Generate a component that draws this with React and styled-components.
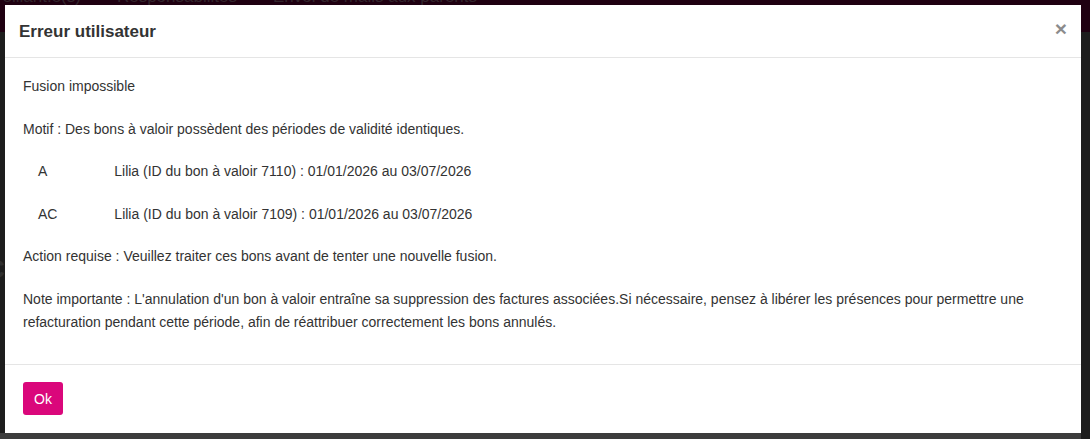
import React from "react";
import styled, { createGlobalStyle } from "styled-components";

const Global = createGlobalStyle`
  html, body { margin: 0; padding: 0; }
  body {
    width: 1090px;
    height: 439px;
    overflow: hidden;
    background: #1d1d1d;
    font-family: "Liberation Sans", Arial, sans-serif;
  }
`;

const Page = styled.div`
  position: relative;
  width: 1090px;
  height: 439px;
  display: flex;
  flex-direction: column;
  background: #1d1d1d;
`;

const NavBar = styled.div`
  height: 32px;
  background: #1f0011;
  display: flex;
  gap: 36px;
  overflow: hidden;
`;

const NavItem = styled.span`
  margin-top: -13px;
  font-size: 17px;
  line-height: 20px;
  color: #33262d;
  white-space: nowrap;
  margin-left: ${(p) => p.$offset || 0}px;
`;

const Main = styled.div`
  flex: 1;
  padding-top: 222px;
`;

const PageHeading = styled.div`
  margin-left: -14px;
  width: 18px;
  overflow: hidden;
  font-size: 26px;
  font-weight: bold;
  color: #2f2f2f;
`;

const BottomBar = styled.div`
  height: 6px;
  width: 1081px;
  background: #3c3c3c;
`;

const Modal = styled.div`
  position: absolute;
  left: 5px;
  top: 5px;
  width: 1076px;
  height: 428px;
  background: #fff;
  display: flex;
  flex-direction: column;
  color: #333;
`;

const Header = styled.div`
  display: flex;
  align-items: center;
  justify-content: space-between;
  height: 52px;
  padding: 0 14px;
  border-bottom: 1px solid #e5e5e5;
`;

const Title = styled.h4`
  margin: 0;
  font-size: 17px;
  font-weight: bold;
  color: #333;
  line-height: 25px;
`;

const Close = styled.button`
  border: 0;
  background: transparent;
  padding: 0;
  margin-top: -5px;
  font-family: "Liberation Sans", Arial, sans-serif;
  font-size: 21px;
  font-weight: bold;
  line-height: 1;
  color: #000;
  opacity: 0.45;
  cursor: pointer;
`;

const Body = styled.div`
  flex: 1;
  padding: 17px 18px 0;
  font-size: 14px;
  line-height: 23px;
`;

const Para = styled.p`
  margin: 0 0 19.6px;
  padding-left: ${(p) => (p.$indent ? 15 : 0)}px;
`;

const Redacted = styled.span`
  display: inline-block;
  width: ${(p) => p.$w}px;
  height: 1em;
`;

const Footer = styled.div`
  height: 69px;
  box-sizing: border-box;
  border-top: 1px solid #e5e5e5;
  padding: 17px 18px;
  display: flex;
  align-items: flex-start;
`;

const Button = styled.button`
  width: 40px;
  height: 33px;
  border: 0;
  border-radius: 3px;
  background: #da077b;
  color: #fff;
  font-family: "Liberation Sans", Arial, sans-serif;
  font-size: 14px;
  padding: 0;
  cursor: pointer;
`;

export default function App() {
  return (
    <>
      <Global />
      <Page>
        <NavBar>
          <NavItem $offset={-6}>veillant.e(s)</NavItem>
          <NavItem>Responsabilités</NavItem>
          <NavItem>Envoi de mails aux parents</NavItem>
        </NavBar>
        <Main>
          <PageHeading>C</PageHeading>
        </Main>
        <BottomBar />
        <Modal>
          <Header>
            <Title>Erreur utilisateur</Title>
            <Close aria-label="Fermer">×</Close>
          </Header>
          <Body>
            <Para>Fusion impossible</Para>
            <Para>
              Motif : Des bons à valoir possèdent des périodes de validité
              identiques.
            </Para>
            <Para $indent>
              A<Redacted $w={63} /> Lilia (ID du bon à valoir 7110) : 01/01/2026
              au 03/07/2026
            </Para>
            <Para $indent>
              AC<Redacted $w={53} /> Lilia (ID du bon à valoir 7109) : 01/01/2026
              au 03/07/2026
            </Para>
            <Para>
              Action requise : Veuillez traiter ces bons avant de tenter une
              nouvelle fusion.
            </Para>
            <Para>
              Note importante : L'annulation d'un bon à valoir entraîne sa
              suppression des factures associées.Si nécessaire, pensez à libérer
              les présences pour permettre une refacturation pendant cette
              période, afin de réattribuer correctement les bons annulés.
            </Para>
          </Body>
          <Footer>
            <Button>Ok</Button>
          </Footer>
        </Modal>
      </Page>
    </>
  );
}
